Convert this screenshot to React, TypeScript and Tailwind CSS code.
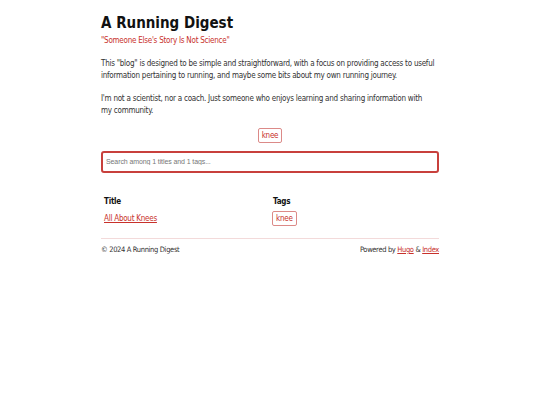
const red = "text-[#c8312b]";

function Tag({ label }: { label: string }) {
  return (
    <span className="inline-flex h-[15px] items-center rounded-[2px] border border-[#dc8a88] px-[3px] text-[8px] leading-none text-[#c8312b]">
      {label}
    </span>
  );
}

export default function App() {
  return (
    <div
      className="min-h-screen bg-white text-[#333] tracking-[-0.25px]"
      style={{ fontFamily: "'DejaVu Sans Condensed', 'DejaVu Sans', sans-serif" }}
    >
      <div className="mx-auto w-[338px] pt-[11px]">
        <header>
          <h1 className="text-[15px] font-bold leading-[24px] tracking-normal text-[#111]">A Running Digest</h1>
          <p className={`text-[8px] leading-[12px] ${red}`}>"Someone Else's Story Is Not Science"</p>
        </header>

        <div className="mt-[11px] space-y-[11px] text-[8px] leading-[12px]">
          <p>
            This "blog" is designed to be simple and straightforward, with a focus on providing access to useful
            information pertaining to running, and maybe some bits about my own running journey.
          </p>
          <p>
            I'm not a scientist, nor a coach. Just someone who enjoys learning and sharing information with
            <br />
            my community.
          </p>
        </div>

        <div className="mt-[11px] flex justify-center">
          <Tag label="knee" />
        </div>

        <div className="mt-[8px] flex h-[22px] items-center rounded-[3px] border-2 border-[#c8403c] px-[3px]">
          <input
            className="w-full bg-transparent text-[7px] tracking-[-0.1px] text-[#333] placeholder-[#777] outline-none"
            style={{ fontFamily: "'Liberation Sans', Arial, sans-serif" }}
            placeholder="Search among 1 titles and 1 tags..."
          />
        </div>

        <table className="mt-[23px] w-full text-left text-[8px]">
          <thead>
            <tr>
              <th className="w-[169px] px-[3px] pb-[3px] font-bold text-[#111]">Title</th>
              <th className="px-[3px] pb-[3px] font-bold text-[#111]">Tags</th>
            </tr>
          </thead>
          <tbody>
            <tr>
              <td className="px-[3px] align-middle">
                <a href="#" className={`underline ${red}`}>All About Knees</a>
              </td>
              <td className="px-[2px] align-middle">
                <Tag label="knee" />
              </td>
            </tr>
          </tbody>
        </table>

        <footer className="mt-[12px] flex items-center justify-between border-t border-[#f3dada] pt-[5px] text-[7.5px] leading-[12px] tracking-[-0.35px]">
          <span>© 2024 A Running Digest</span>
          <span>
            Powered by <a href="#" className={`underline ${red}`}>Hugo</a> &{" "}
            <a href="#" className={`underline ${red}`}>Index</a>
          </span>
        </footer>
      </div>
    </div>
  );
}
